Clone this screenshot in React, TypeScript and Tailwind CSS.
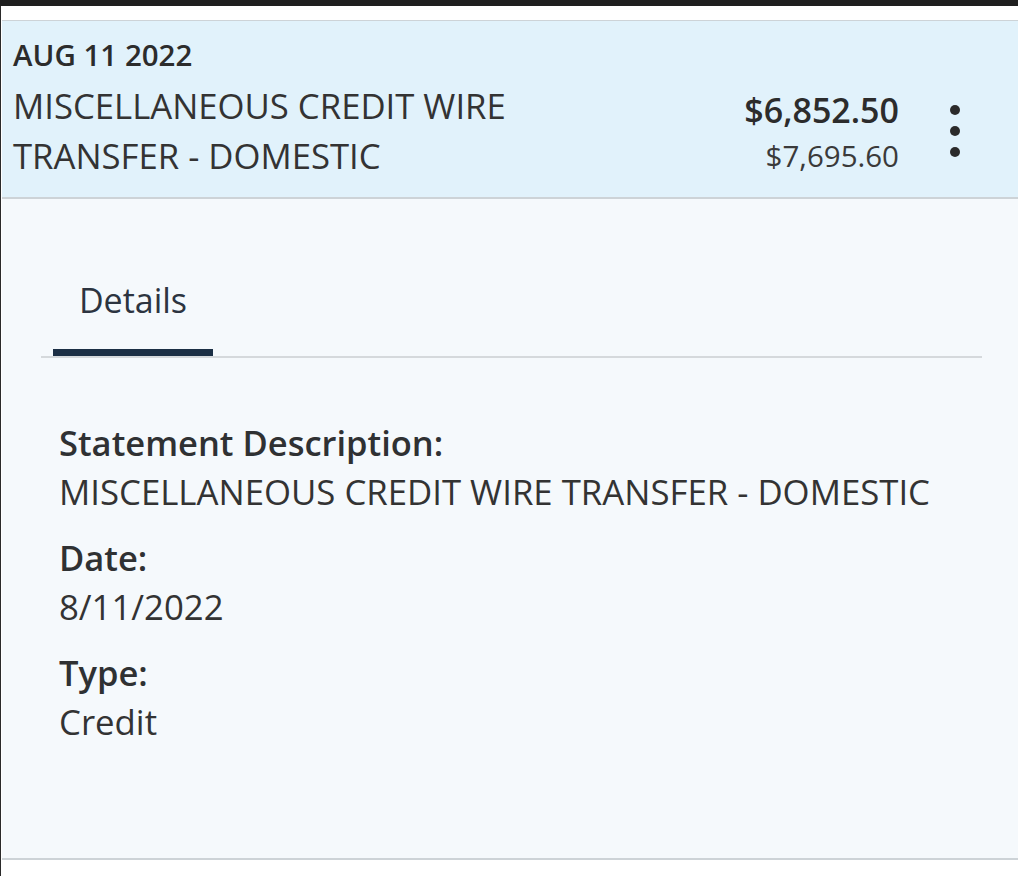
import React from "react";

interface Detail {
  label: string;
  value: string;
}

const details: Detail[] = [
  { label: "Statement Description:", value: "MISCELLANEOUS CREDIT WIRE TRANSFER - DOMESTIC" },
  { label: "Date:", value: "8/11/2022" },
  { label: "Type:", value: "Credit" },
];

function Dots() {
  return (
    <div className="flex flex-col items-center gap-[11px] pt-[84px]">
      <span className="block w-[10px] h-[10px] rounded-full bg-[#2b2b2b]" />
      <span className="block w-[10px] h-[10px] rounded-full bg-[#2b2b2b]" />
      <span className="block w-[10px] h-[10px] rounded-full bg-[#2b2b2b]" />
    </div>
  );
}

export default function App() {
  return (
    <div
      className="w-[1018px] h-[876px] bg-white text-[#2f3133] overflow-hidden"
      style={{ fontFamily: '"Open Sans", "Noto Sans", sans-serif' }}
    >
      <div className="h-[6px] bg-[#1f1f1f]" />
      <div className="h-[870px] border-l border-[#2a2a2a] pt-[14px]">
        {/* transaction header */}
        <div className="ml-[1px] border-t border-b-2 border-[#cdd3d7] bg-[#e1f2fb] flex items-start pl-[11px] pr-[58px] pt-[16px] pb-[16px]">
          <div className="flex-1">
            <div className="text-[29.5px] leading-[36px] font-semibold text-[#2c2c2c]">AUG 11 2022</div>
            <div className="mt-[8px] text-[34.7px] leading-[50px] text-[#333]">
              MISCELLANEOUS CREDIT WIRE
              <br />
              TRANSFER - DOMESTIC
            </div>
          </div>
          <div className="flex flex-col items-end pt-[50px]">
            <div className="text-[34px] leading-[46px] font-semibold text-[#2c2c2c]">$6,852.50</div>
            <div className="text-[29.5px] leading-[46px] text-[#3a3a3a]">$7,695.60</div>
          </div>
          <div className="ml-[51px] -mt-[16px]">
            <Dots />
          </div>
        </div>

        {/* details panel */}
        <div className="ml-[1px] bg-[#f5f9fc] border-b-2 border-[#cdd3d7] pt-[79px] pb-[112px]">
          <div className="ml-[39px] mr-[36px] border-b-2 border-[#d5d9dc] flex">
            <div className="ml-[12px] w-[160px] flex flex-col items-center">
              <span className="text-[34px] leading-[44px] text-[#2c3440]">Details</span>
              <span className="mt-[27px] block w-full h-[7px] bg-[#1b2f45]" />
            </div>
          </div>
          <div className="pl-[57px] pt-[60px] flex flex-col gap-[17px]">
            {details.map((d) => (
              <div key={d.label}>
                <div className="text-[34.5px] leading-[49px] font-semibold text-[#2f3133]">{d.label}</div>
                <div className="text-[34.75px] leading-[49px] text-[#333]">{d.value}</div>
              </div>
            ))}
          </div>
        </div>
      </div>
    </div>
  );
}
